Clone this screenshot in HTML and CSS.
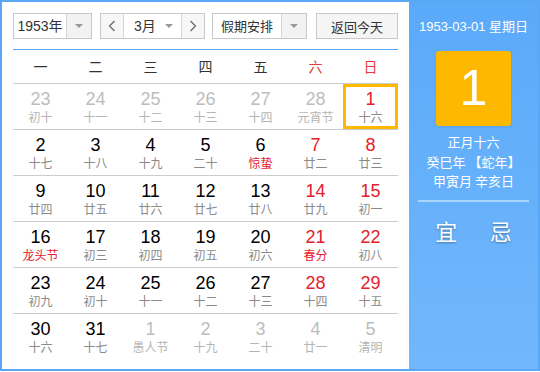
FILE: index.html
```html
<!DOCTYPE html>
<html lang="zh-CN">
<head>
  <meta charset="UTF-8">
  <title>万年历</title>
  <link rel="stylesheet" href="styles.css">
</head>
<body>
  <div class="calendar">
    <div class="main">
      <div class="controls">
        <div class="select year-select">
          <span class="select-text">1953年</span>
          <span class="select-arrow"><i class="caret"></i></span>
        </div>
        <div class="month-group">
          <button class="nav-btn">
            <svg width="8" height="12" viewBox="0 0 8 12"><polyline points="6.5,1 1.5,6 6.5,11" fill="none" stroke="#666" stroke-width="1.2"/></svg>
          </button>
          <div class="month-select">
            <span class="select-text">3月</span>
            <i class="caret"></i>
          </div>
          <button class="nav-btn">
            <svg width="8" height="12" viewBox="0 0 8 12"><polyline points="1.5,1 6.5,6 1.5,11" fill="none" stroke="#666" stroke-width="1.2"/></svg>
          </button>
        </div>
        <div class="select holiday-select">
          <span class="select-text">假期安排</span>
          <span class="select-arrow"><i class="caret"></i></span>
        </div>
        <button class="today-btn">返回今天</button>
      </div>

      <div class="week-head">
        <span>一</span><span>二</span><span>三</span><span>四</span><span>五</span>
        <span class="weekend">六</span><span class="weekend">日</span>
      </div>

      <div id="days" class="days">
        <!-- rows are built by the script below -->
      </div>
    </div>

    <aside class="side">
      <div class="side-date">1953-03-01 星期日</div>
      <div class="side-day">1</div>
      <div class="side-lunar">
        <p>正月十六</p>
        <p>癸巳年 【蛇年】</p>
        <p>甲寅月 辛亥日</p>
      </div>
      <div class="side-divider"></div>
      <div class="side-luck">
        <span>宜</span>
        <span>忌</span>
      </div>
    </aside>
  </div>

  <script>
    // [day, lunar text, other month?, festival?]
    const days = [
      [23, '初十', 1], [24, '十一', 1], [25, '十二', 1], [26, '十三', 1], [27, '十四', 1], [28, '元宵节', 1], [1, '十六'],
      [2, '十七'], [3, '十八'], [4, '十九'], [5, '二十'], [6, '惊蛰', 0, 1], [7, '廿二'], [8, '廿三'],
      [9, '廿四'], [10, '廿五'], [11, '廿六'], [12, '廿七'], [13, '廿八'], [14, '廿九'], [15, '初一'],
      [16, '龙头节', 0, 1], [17, '初三'], [18, '初四'], [19, '初五'], [20, '初六'], [21, '春分', 0, 1], [22, '初八'],
      [23, '初九'], [24, '初十'], [25, '十一'], [26, '十二'], [27, '十三'], [28, '十四'], [29, '十五'],
      [30, '十六'], [31, '十七'], [1, '愚人节', 1], [2, '十九', 1], [3, '二十', 1], [4, '廿一', 1], [5, '清明', 1]
    ];
    const dayList = document.getElementById('days');

    for (let r = 0; r < 6; r++) {
      const row = document.createElement('div');
      row.className = 'week-row';
      for (let c = 0; c < 7; c++) {
        const [num, lunar, other, fest] = days[r * 7 + c];
        const cell = document.createElement('div');
        cell.className = 'day';
        if (other) cell.classList.add('other');
        else if (c >= 5) cell.classList.add('weekend');
        if (fest) cell.classList.add('festival');
        if (r === 0 && c === 6) cell.classList.add('today');
        cell.innerHTML = `<span class="num">${num}</span><span class="lunar">${lunar}</span>`;
        row.appendChild(cell);
      }
      dayList.appendChild(row);
    }
  </script>
</body>
</html>
```

FILE: styles.css
```css
/* General styles */
body {
  margin: 0;
  font-family: "Liberation Sans", "Noto Sans CJK SC", sans-serif;
  color: #333;
  background: #fff;
}

.calendar {
  width: 540px;
  height: 371px;
  box-sizing: border-box;
  border: 2px solid #5aa8f5;
  display: flex;
}

/* Left part */
.main {
  width: 407px;
  padding: 11px 11px 0 11px;
  box-sizing: border-box;
}

.controls {
  display: flex;
  height: 26px;
  margin-bottom: 10px;
  font-family: "Noto Sans CJK SC", sans-serif;
  font-size: 13px;
  color: #333;
}

.select,
.month-group {
  display: flex;
  border: 1px solid #c8c8c8;
  box-sizing: border-box;
  height: 26px;
  background: #fff;
}

.select-text {
  flex: 1;
  line-height: 24px;
  text-align: center;
}

.select-arrow {
  width: 24px;
  background: #f2f2f2;
  border-left: 1px solid #d5d5d5;
  display: flex;
  align-items: center;
  justify-content: center;
}

.caret {
  width: 0;
  height: 0;
  border-left: 4px solid transparent;
  border-right: 4px solid transparent;
  border-top: 4px solid #999;
}

.year-select {
  width: 79px;
}

.year-select .select-text {
  font-family: "Liberation Sans", "Noto Sans CJK SC", sans-serif;
  font-size: 14px;
}

.month-group {
  width: 105px;
  margin-left: 8px;
}

.nav-btn {
  width: 23px;
  border: none;
  padding: 0;
  background: #f7f7f7;
  display: flex;
  align-items: center;
  justify-content: center;
}

.nav-btn:first-child {
  border-right: 1px solid #d5d5d5;
}

.nav-btn:last-child {
  border-left: 1px solid #d5d5d5;
}

.month-select {
  flex: 1;
  display: flex;
  align-items: center;
  padding: 0 8px 0 10px;
}

.month-select .select-text {
  text-align: left;
  font-family: "Liberation Sans", "Noto Sans CJK SC", sans-serif;
  font-size: 14px;
}

.holiday-select {
  width: 95px;
  margin-left: 7px;
}

.today-btn {
  margin-left: 9px;
  width: 82px;
  height: 26px;
  border: 1px solid #c8c8c8;
  background: #f5f5f5;
  font-family: "Noto Sans CJK SC", sans-serif;
  font-size: 13px;
  color: #333;
  padding: 0;
}

/* Week header */
.week-head {
  display: grid;
  grid-template-columns: repeat(7, 55px);
  border-top: 1px solid #5aa8f5;
  height: 33px;
  line-height: 33px;
  text-align: center;
  font-family: "Noto Sans CJK SC", sans-serif;
  font-size: 14px;
  color: #333;
}

.week-head .weekend {
  color: #e83a3a;
}

/* Days */
.week-row {
  display: grid;
  grid-template-columns: repeat(7, 55px);
  border-top: 1px solid #cccccc;
}

.day {
  height: 45px;
  display: flex;
  flex-direction: column;
  align-items: center;
  padding-top: 4px;
  box-sizing: border-box;
}

.num {
  font-size: 18px;
  line-height: 22px;
  color: #000;
}

.lunar {
  font-family: "Noto Sans CJK SC", sans-serif;
  font-size: 12px;
  line-height: 14px;
  color: #8a8a8a;
}

.day.weekend .num {
  color: #e3202c;
}

.day.festival .lunar {
  color: #e3202c;
}

.day.other .num {
  color: #bdbdbd;
}

.day.other .lunar {
  color: #b5b5b5;
}

.day.today {
  box-shadow: inset 0 0 0 3px #ffb800;
}

.day.today .num {
  color: #e3202c;
}

/* Right panel */
.side {
  flex: 1;
  background: linear-gradient(to bottom, #5aaafa, #72b7fc);
  color: #fff;
  text-align: center;
  font-family: "Liberation Sans", "Noto Sans CJK SC", sans-serif;
}

.side-date {
  margin-top: 16px;
  font-size: 13px;
  line-height: 18px;
}

.side-day {
  width: 75px;
  height: 75px;
  margin: 15px auto 0;
  background: #ffb800;
  border-radius: 3px;
  font-size: 50px;
  line-height: 75px;
  box-shadow: 0 1px 3px rgba(0, 0, 0, 0.08);
}

.side-lunar {
  margin-top: 6px;
  font-family: "Noto Sans CJK SC", sans-serif;
  font-size: 13px;
}

.side-lunar p {
  margin: 0;
  line-height: 19.5px;
}

.side-divider {
  height: 2px;
  margin: 9px 9px 0;
  background: rgba(255, 255, 255, 0.45);
}

.side-luck {
  display: flex;
  margin: 13px 10px 0;
  font-family: "Noto Sans CJK SC", sans-serif;
  font-size: 22px;
  line-height: 30px;
  text-shadow: 0 1px 2px rgba(0, 0, 0, 0.35);
}

.side-luck span {
  flex: 1;
}
```
